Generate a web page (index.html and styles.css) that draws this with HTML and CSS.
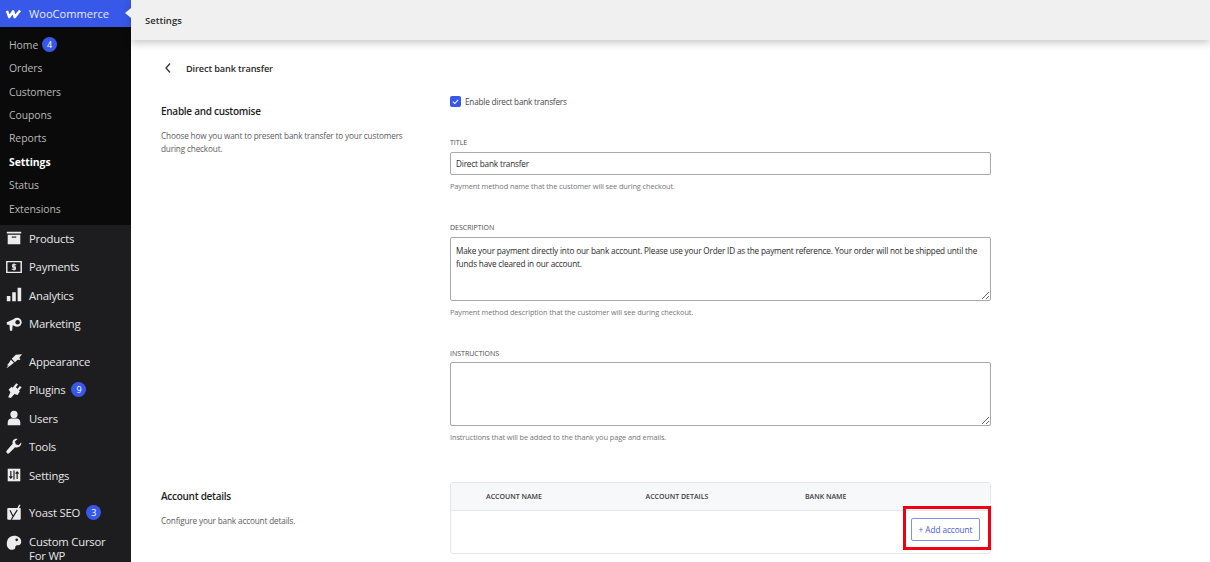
FILE: index.html
```html
<!DOCTYPE html>
<html lang="en">
<head>
    <meta charset="UTF-8">
    <meta name="viewport" content="width=device-width, initial-scale=1.0">
    <title>Direct bank transfer</title>
    <link rel="stylesheet" href="styles.css">
</head>
<body>
    <aside class="sidebar">
        <div class="brand">
            <svg class="brand-logo" viewBox="0 0 22 12" aria-hidden="true"><path d="M2.5 2L5.500 10L10.500 2.500L12.500 10L19.500 1.500"/></svg>
            <span>WooCommerce</span>
        </div>
        <ul class="submenu">
            <li>Home <span class="badge">4</span></li>
            <li>Orders</li>
            <li>Customers</li>
            <li>Coupons</li>
            <li>Reports</li>
            <li class="current">Settings</li>
            <li>Status</li>
            <li>Extensions</li>
        </ul>
        <ul class="menu">
            <li>
                <svg viewBox="0 0 20 20"><path d="M2 3h16v2H2zM3 6.500h14V17H3z"/><path class="cut" d="M7.500 9h5"/></svg>
                Products
            </li>
            <li>
                <svg viewBox="0 0 20 20"><path class="line" d="M2 4h16v12H2z"/><path class="line thin" d="M12.500 7.500H8.500v2.500h3v2.500h-4M10 6v8"/></svg>
                Payments
            </li>
            <li>
                <svg viewBox="0 0 20 20"><path d="M2 11h4v6H2zM8 7h4v10H8zM14 2h4v15h-4z"/></svg>
                Analytics
            </li>
            <li>
                <svg viewBox="0 0 20 20"><path d="M2 8l10-4.500v9L8.500 11.500 8 17.500H5.500L5 11 2 10.500z"/><circle cx="13.500" cy="8" r="5"/><circle class="hole" cx="14" cy="8" r="2.500"/></svg>
                Marketing
            </li>
            <li class="group-start">
                <svg viewBox="0 0 20 20"><path d="M12 3l7-.5-3 3.500 1 3-3-.5-3 3-3.500-4zM6.500 8.500l3.500 3.500-2.500 2-5 3.500-1 .5 2.500-3.500-2 .5 2.500-3z"/></svg>
                Appearance
            </li>
            <li>
                <svg viewBox="0 0 20 20"><path d="M12.500 2.500l2 1.500-2.500 3 2 1.500 2.500-3 2 1.500-3 3.500 1 1-2.500 4-3.500-1-4 4.500-3-1 2.500-5.500-2-3 3.500-3 1 1z"/></svg>
                Plugins <span class="badge">9</span>
            </li>
            <li>
                <svg viewBox="0 0 20 20"><circle cx="10" cy="6" r="4"/><path d="M3 18v-3c0-3 2-4.500 4-4.500h6c2 0 4 1.500 4 4.500v3z"/></svg>
                Users
            </li>
            <li>
                <svg viewBox="0 0 20 20"><path d="M18 5l-3 3-3-1-1-3 3-3c-3-.8-6.500 1.500-5.500 5.500L2 14c-1.500 1.500.5 4.500 2.500 3l6.800-6.800C15.500 11.500 18.800 8 18 5z"/></svg>
                Tools
            </li>
            <li>
                <svg viewBox="0 0 20 20"><path d="M3 3h14v14H3z"/><path class="cut" d="M6.500 5.500v8M4.800 11.500l1.700 2 1.700-2M10 5v10M13.500 14.500v-8M11.800 8.500l1.700-2 1.700 2"/></svg>
                Settings
            </li>
            <li class="group-start">
                <svg viewBox="0 0 20 20"><path d="M4 4.500h12c1 0 1.500.5 1.500 1.500v10c0 1-.5 1.500-1.500 1.500H4c-1 0-1.500-.5-1.500-1.500V6c0-1 .5-1.500 1.500-1.500z"/><path class="cut" d="M5.500 7l3.500 7-2 3.500M14 6l-5 8"/><path class="line" d="M13.500 6.500L16.500 1"/></svg>
                Yoast SEO <span class="badge">3</span>
            </li>
            <li class="two-line">
                <svg viewBox="0 0 20 20"><path d="M10 2c5 0 8 3 8 6.500 0 3-2 4-4 4-1.500 0-2.500.5-2.500 2 0 2-1 3-3.500 3C4 17.500 2 14.500 2 11c0-5 3-9 8-9z"/><circle class="hole" cx="13" cy="6.500" r="1.500"/></svg>
                <span>Custom Cursor<br>For WP</span>
            </li>
        </ul>
    </aside>

    <div class="page">
        <header class="topbar">Settings</header>
        <span class="menu-notch"></span>
        <main class="content">
            <div class="back-row">
                <svg viewBox="0 0 10 12" aria-hidden="true"><path d="M7 1.500L3 6l4 4.500"/></svg>
                <span>Direct bank transfer</span>
            </div>

            <section class="settings-row enable">
                <div class="intro">
                    <h2>Enable and customise</h2>
                    <p>Choose how you want to present bank transfer to your customers during checkout.</p>
                </div>
                <div class="fields">
                    <label class="check">
                        <span class="check-box"><svg viewBox="0 0 12 12"><path d="M2.500 6.200l2.500 2.500 4.500-5"/></svg></span>
                        Enable direct bank transfers
                    </label>
                    <div class="field field-title">
                        <label for="title">Title</label>
                        <input id="title" type="text" value="Direct bank transfer">
                        <p class="hint">Payment method name that the customer will see during checkout.</p>
                    </div>
                    <div class="field field-description">
                        <label for="description">Description</label>
                        <textarea id="description">Make your payment directly into our bank account. Please use your Order ID as the payment reference. Your order will not be shipped until the funds have cleared in our account.</textarea>
                        <p class="hint">Payment method description that the customer will see during checkout.</p>
                    </div>
                    <div class="field field-instructions">
                        <label for="instructions">Instructions</label>
                        <textarea id="instructions"></textarea>
                        <p class="hint">Instructions that will be added to the thank you page and emails.</p>
                    </div>
                </div>
            </section>

            <section class="settings-row accounts">
                <div class="intro">
                    <h2>Account details</h2>
                    <p>Configure your bank account details.</p>
                </div>
                <div class="account-table">
                    <div class="account-head">
                        <span>Account name</span>
                        <span>Account details</span>
                        <span>Bank name</span>
                    </div>
                    <div class="account-body">
                        <div class="highlight">
                            <button type="button" class="add-account">+ Add account</button>
                        </div>
                    </div>
                </div>
            </section>
        </main>
    </div>
</body>
</html>
```

FILE: styles.css
```css
* {
    margin: 0;
    padding: 0;
    box-sizing: border-box;
}

html, body {
    height: 562px;
    overflow: hidden;
}

body {
    display: flex;
    background: #fff;
    color: #2a2a2a;
    font-family: "Open Sans", "Noto Sans", sans-serif;
    font-size: 9px;
}

/* Sidebar */
.sidebar {
    width: 131px;
    height: 562px;
    flex-shrink: 0;
    overflow: hidden;
    background: #1d1d1f;
    color: #e6e6e6;
    font-size: 11.3px;
    letter-spacing: -0.2px;
}

.sidebar ul {
    list-style: none;
}

.brand {
    display: flex;
    align-items: center;
    gap: 7px;
    height: 27px;
    padding-left: 5px;
    background: #3858e9;
    color: #e8ecff;
    font-size: 11.1px;
    letter-spacing: 0;
}

.brand-logo {
    width: 17px;
    height: 10px;
    fill: none;
    stroke: #fff;
    stroke-width: 3.2;
    stroke-linejoin: round;
}

.submenu {
    height: 198px;
    padding-top: 6px;
    background: #0a0a0a;
    color: #b9b9b9;
    font-size: 10.4px;
    letter-spacing: -0.05px;
}

.submenu li {
    display: flex;
    align-items: center;
    gap: 4px;
    height: 23.45px;
    padding-left: 9px;
}

.submenu .current {
    color: #fff;
    font-weight: 700;
}

.badge {
    display: inline-flex;
    align-items: center;
    justify-content: center;
    width: 15px;
    height: 15px;
    border-radius: 50%;
    background: #3858e9;
    color: #fff;
    font-size: 9px;
}

.menu li {
    display: flex;
    align-items: center;
    gap: 6px;
    height: 28.5px;
    padding-left: 5px;
    padding-bottom: 2px;
    white-space: nowrap;
}

.menu .group-start {
    margin-top: 9px;
}

.menu .two-line {
    align-items: flex-start;
    padding-top: 7px;
    padding-bottom: 0;
    line-height: 14px;
}

.menu .two-line svg {
    margin-top: -1px;
}

.menu svg {
    width: 18px;
    height: 18px;
    flex-shrink: 0;
    fill: #ececec;
}

.menu .cut {
    fill: none;
    stroke: #1d1d1f;
    stroke-width: 1.3;
}

.menu .line {
    fill: none;
    stroke: #ececec;
    stroke-width: 1.6;
}

.menu .thin {
    stroke-width: 1.3;
}

.menu .hole {
    fill: #1d1d1f;
}

/* Main area */
.page {
    position: relative;
    flex: 1;
    min-width: 0;
}

.topbar {
    display: flex;
    align-items: center;
    height: 40px;
    padding-left: 14px;
    background: #f0f0f0;
    box-shadow: 0 3px 8px rgba(0, 0, 0, 0.22);
    color: #2c2c2c;
    font-size: 9.5px;
    font-weight: 600;
}

.menu-notch {
    position: absolute;
    top: 8px;
    left: -6px;
    width: 0;
    height: 0;
    border-top: 5.5px solid transparent;
    border-bottom: 5.5px solid transparent;
    border-right: 6px solid #f0f0f0;
}

.content {
    padding: 0 219px 0 30px;
}

.back-row {
    display: flex;
    align-items: center;
    gap: 13px;
    height: 16px;
    margin-top: 20px;
    padding-left: 2px;
    font-size: 9.2px;
    font-weight: 600;
    letter-spacing: -0.13px;
}

.back-row svg {
    width: 10px;
    height: 12px;
    fill: none;
    stroke: #333;
    stroke-width: 1.3;
}

.settings-row {
    display: grid;
    grid-template-columns: 289px 541px;
}

.enable {
    margin-top: 19px;
}

.enable .intro {
    padding-top: 9px;
}

.accounts {
    margin-top: 39px;
}

.accounts .intro {
    padding-top: 7px;
}

.intro h2 {
    margin-bottom: 11px;
    color: #1e1e1e;
    font-size: 10px;
    font-weight: 600;
    line-height: 14px;
    letter-spacing: -0.28px;
}

.intro p {
    width: 250px;
    color: #5c5c5c;
    font-size: 8.2px;
    line-height: 13px;
    letter-spacing: -0.15px;
}

.check {
    display: flex;
    align-items: center;
    gap: 4px;
    height: 12px;
    color: #4a4a4a;
    font-size: 8.2px;
    letter-spacing: -0.2px;
}

.check-box {
    display: flex;
    align-items: center;
    justify-content: center;
    width: 11px;
    height: 11px;
    border-radius: 2px;
    background: #3858e9;
}

.check-box svg {
    width: 9px;
    height: 9px;
    fill: none;
    stroke: #fff;
    stroke-width: 1.4;
}

.field label {
    display: block;
    height: 10px;
    margin-bottom: 4px;
    color: #4a4a4a;
    font-size: 7px;
    line-height: 10px;
    text-transform: uppercase;
}

.field-title {
    margin-top: 31px;
}

.field-description {
    margin-top: 31px;
}

.field-instructions {
    margin-top: 31px;
}

.field-instructions label {
    margin-bottom: 3px;
}

.field input,
.field textarea {
    display: block;
    width: 100%;
    padding: 0 5px;
    border: 1px solid #a9a9a9;
    border-radius: 2px;
    background: #fff;
    color: #2a2a2a;
    font-family: inherit;
    font-size: 8.2px;
    letter-spacing: -0.17px;
    outline: none;
}

.field input {
    height: 23px;
}

.field textarea {
    height: 64px;
    padding-top: 6px;
    line-height: 13px;
    resize: vertical;
}

.hint {
    margin-top: 6px;
    color: #767676;
    font-size: 7.4px;
    line-height: 11px;
    letter-spacing: -0.1px;
}

.account-table {
    height: 72px;
    border: 1px solid #e6e6e8;
    border-radius: 3px;
}

.account-head {
    display: grid;
    grid-template-columns: 159.5px 159.5px 1fr;
    align-items: center;
    height: 28px;
    padding-left: 35px;
    border-bottom: 1px solid #e6e6e8;
    background: #f7f8fa;
    color: #3c3c3c;
    font-size: 7px;
    font-weight: 600;
    text-transform: uppercase;
}

.account-body {
    display: flex;
    justify-content: flex-end;
}

.highlight {
    display: flex;
    align-items: center;
    justify-content: center;
    width: 88px;
    height: 44px;
    margin-top: -5px;
    margin-right: -1px;
    padding-right: 3px;
    padding-top: 3px;
    border: 3px solid #f00010;
}

.add-account {
    width: 69px;
    height: 23px;
    border: 1px solid #7f92ea;
    border-radius: 2px;
    background: #fff;
    color: #3f58d8;
    font-family: inherit;
    font-size: 8.2px;
    letter-spacing: -0.05px;
}
```
